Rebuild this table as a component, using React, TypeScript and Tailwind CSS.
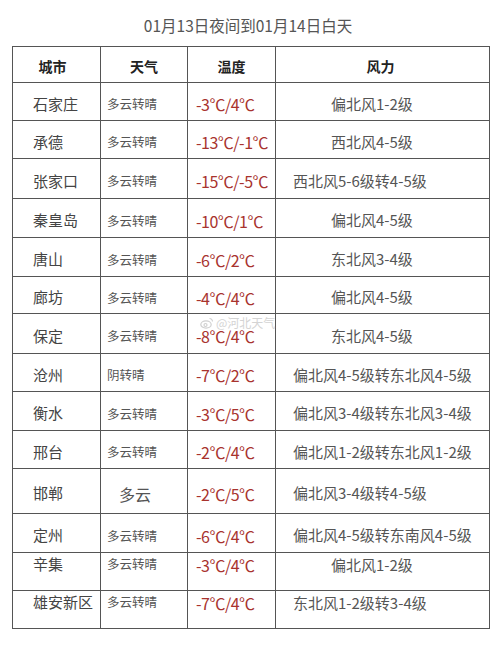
const rows = [
  { city: '石家庄', weather: '多云转晴', temp: '-3℃/4℃', wind: '偏北风1-2级', h: 'h-[38px]', wide: false },
  { city: '承德', weather: '多云转晴', temp: '-13℃/-1℃', wind: '西北风4-5级', h: 'h-[38px]', wide: false },
  { city: '张家口', weather: '多云转晴', temp: '-15℃/-5℃', wind: '西北风5-6级转4-5级', h: 'h-[40px]', wide: true },
  { city: '秦皇岛', weather: '多云转晴', temp: '-10℃/1℃', wind: '偏北风4-5级', h: 'h-[39px]', wide: false },
  { city: '唐山', weather: '多云转晴', temp: '-6℃/2℃', wind: '东北风3-4级', h: 'h-[39px]', wide: false },
  { city: '廊坊', weather: '多云转晴', temp: '-4℃/4℃', wind: '偏北风4-5级', h: 'h-[37px]', wide: false },
  { city: '保定', weather: '多云转晴', temp: '-8℃/4℃', wind: '东北风4-5级', h: 'h-[40px]', wide: false },
  { city: '沧州', weather: '阴转晴', temp: '-7℃/2℃', wind: '偏北风4-5级转东北风4-5级', h: 'h-[38px]', wide: true },
  { city: '衡水', weather: '多云转晴', temp: '-3℃/5℃', wind: '偏北风3-4级转东北风3-4级', h: 'h-[39px]', wide: true },
  { city: '邢台', weather: '多云转晴', temp: '-2℃/4℃', wind: '偏北风1-2级转东北风1-2级', h: 'h-[38px]', wide: true },
  { city: '邯郸', weather: '多云', temp: '-2℃/5℃', wind: '偏北风3-4级转4-5级', h: 'h-[45px]', wide: true },
  { city: '定州', weather: '多云转晴', temp: '-6℃/4℃', wind: '偏北风4-5级转东南风4-5级', h: 'h-[39px]', wide: true },
  { city: '辛集', weather: '多云转晴', temp: '-3℃/4℃', wind: '偏北风1-2级', h: 'h-[38px]', wide: false, top: true },
  { city: '雄安新区', weather: '多云转晴', temp: '-7℃/4℃', wind: '东北风1-2级转3-4级', h: 'h-[38px]', wide: true, top: true },
];

export default function App() {
  return (
    <div
      className="relative h-[646px] w-[500px] bg-white"
      style={{ fontFamily: '"Noto Sans CJK SC", "Noto Sans", sans-serif' }}
    >
      <div className="flex h-[46px] items-center justify-center pt-[6px] pr-[4px] text-[15.5px] text-[#555]">
        01月13日夜间到01月14日白天
      </div>

      <table className="ml-[12px] w-[478px] table-fixed border-collapse border-[1.5px] border-[#555]">
        <colgroup>
          <col className="w-[88px]" />
          <col className="w-[87px]" />
          <col className="w-[88px]" />
          <col />
        </colgroup>
        <thead>
          <tr className="h-[36px] text-[14px] font-bold text-[#222]">
            <th className="border border-[#555] pt-[3px] pr-[8px] text-center">城市</th>
            <th className="border border-[#555] pt-[3px] text-center">天气</th>
            <th className="border border-[#555] pt-[3px] text-center">温度</th>
            <th className="border border-[#555] pt-[3px] pr-[4px] text-center">风力</th>
          </tr>
        </thead>
        <tbody>
          {rows.map((r) => (
            <tr key={r.city} className={r.h}>
              <td
                className={`border border-[#555] pl-[20px] text-[15px] text-[#444] whitespace-nowrap ${
                  r.top ? 'align-top pt-0' : 'pt-[5px]'
                }`}
              >
                {r.city}
              </td>
              <td
                className={`border border-[#555] text-[12.5px] text-[#555] whitespace-nowrap ${
                  r.weather === '多云' ? 'pl-[18px] text-[16px]' : 'pl-[6px]'
                } ${r.top ? 'align-top pt-[2px]' : 'pt-[6px]'}`}
              >
                {r.weather}
              </td>
              <td
                className={`border border-[#555] pl-[8px] text-[16px] text-[#a8332e] whitespace-nowrap tracking-[-0.5px] ${
                  r.top ? 'align-top pt-0' : 'pt-[5px]'
                }`}
              >
                {r.temp}
              </td>
              <td
                className={`border border-[#555] text-[15px] text-[#555] whitespace-nowrap ${
                  r.wide ? 'pl-[17px]' : 'pl-[55px]'
                } ${r.top ? 'align-top pt-[1px]' : 'pt-[5px]'}`}
              >
                {r.wind}
              </td>
            </tr>
          ))}
        </tbody>
      </table>

      <div className="pointer-events-none absolute left-[200px] top-[314px] flex items-center gap-[2px] text-[12px] text-[#d4d4d4]">
        <svg width="14" height="12" viewBox="0 0 14 12" fill="none" stroke="#d0d0d0" strokeWidth="1.2">
          <ellipse cx="6" cy="7.5" rx="5.2" ry="3.6" />
          <circle cx="5.5" cy="8" r="1.5" />
          <path d="M9.5 1.5a3 3 0 0 1 3 3" />
        </svg>
        <span>@河北天气</span>
      </div>
    </div>
  );
}
